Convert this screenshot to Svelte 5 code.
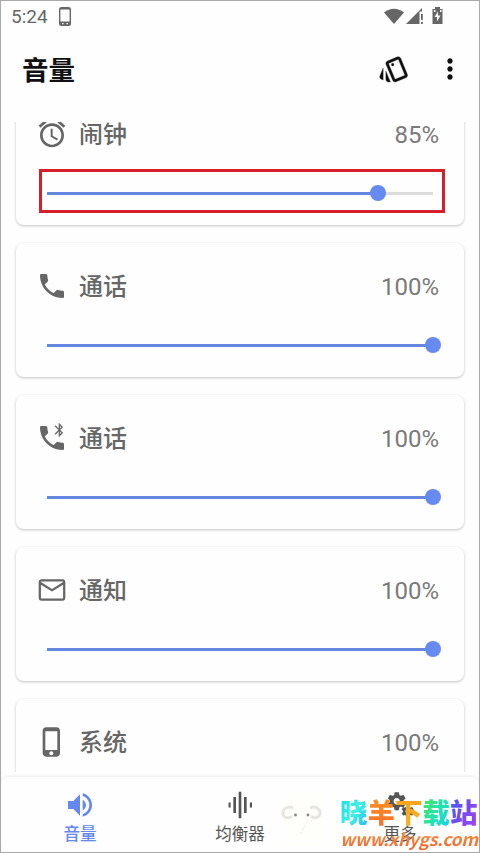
<script lang="ts">
  type Channel = { icon: string; name: string; level: number; marked?: boolean };

  let channels: Channel[] = [
    { icon: "alarm", name: "闹钟", level: 85, marked: true },
    { icon: "call", name: "通话", level: 100 },
    { icon: "bluetooth", name: "通话", level: 100 },
    { icon: "mail", name: "通知", level: 100 },
    { icon: "phone", name: "系统", level: 100 },
  ];

  const tabs = [
    { icon: "volume", name: "音量" },
    { icon: "equalizer", name: "均衡器" },
    { icon: "gears", name: "更多" },
  ];
  let active = "volume";

  function position(level: number) {
    return (Math.round((level / 100) * 7) / 7) * 100;
  }

  const gear =
    "M19.43 12.98c.04-.32.07-.64.07-.98s-.03-.66-.07-.98l2.11-1.65c.19-.15.24-.42.12-.64l-2-3.46c-.12-.22-.39-.3-.61-.22l-2.49 1c-.52-.4-1.08-.73-1.69-.98l-.38-2.65C14.46 2.18 14.25 2 14 2h-4c-.25 0-.46.18-.49.42l-.38 2.65c-.61.25-1.17.59-1.69.98l-2.49-1c-.23-.09-.49 0-.61.22l-2 3.46c-.13.22-.07.49.12.64l2.11 1.65c-.04.32-.07.65-.07.98s.03.66.07.98l-2.11 1.65c-.19.15-.24.42-.12.64l2 3.46c.12.22.39.3.61.22l2.49-1c.52.4 1.08.73 1.69.98l.38 2.65c.03.24.24.42.49.42h4c.25 0 .46-.18.49-.42l.38-2.65c.61-.25 1.17-.59 1.69-.98l2.49 1c.23.09.49 0 .61-.22l2-3.46c.12-.22.07-.49-.12-.64l-2.11-1.65zM12 15.5c-1.93 0-3.5-1.57-3.5-3.5s1.57-3.5 3.5-3.5 3.5 1.57 3.5 3.5-1.57 3.5-3.5 3.5z";

  const paths: Record<string, string> = {
    alarm:
      "M22 5.72l-4.6-3.86-1.29 1.53 4.6 3.86L22 5.72zM7.88 3.39L6.6 1.86 2 5.71l1.29 1.53 4.59-3.85zM12.5 8H11v6l4.75 2.85.75-1.23-4-2.37V8zM12 4c-4.97 0-9 4.03-9 9s4.02 9 9 9c4.97 0 9-4.03 9-9s-4.03-9-9-9zm0 16c-3.87 0-7-3.13-7-7s3.13-7 7-7 7 3.13 7 7-3.13 7-7 7z",
    call:
      "M20 15.5c-1.25 0-2.45-.2-3.57-.57-.35-.11-.74-.03-1.02.24l-2.2 2.2c-2.83-1.44-5.15-3.75-6.59-6.58l2.2-2.21c.28-.27.36-.66.25-1.01C8.7 6.45 8.5 5.25 8.5 4c0-.55-.45-1-1-1H4c-.55 0-1 .45-1 1 0 9.39 7.61 17 17 17 .55 0 1-.45 1-1v-3.5c0-.55-.45-1-1-1z",
    bluetooth:
      "M14.71 9.5L17 7.21V11h.5l2.85-2.85L18.21 6l2.15-2.15L17.5 1H17v3.79L14.71 2.5l-.71.71L16.79 6 14 8.79l.71.71zM18 2.91l.94.94-.94.94V2.91zm0 4.3l.94.94-.94.94V7.21zM20 15.5c-1.25 0-2.45-.2-3.57-.57-.35-.11-.74-.03-1.02.24l-2.2 2.2c-2.83-1.44-5.15-3.75-6.59-6.58l2.2-2.21c.28-.27.36-.66.25-1.01C8.7 6.45 8.5 5.25 8.5 4c0-.55-.45-1-1-1H4c-.55 0-1 .45-1 1 0 9.39 7.61 17 17 17 .55 0 1-.45 1-1v-3.5c0-.55-.45-1-1-1z",
    mail:
      "M20 4H4c-1.1 0-2 .9-2 2v12c0 1.1.9 2 2 2h16c1.1 0 2-.9 2-2V6c0-1.1-.9-2-2-2zm.3 14.300H3.700V8l8.300 5.200 8.300-5.200v10.300zm-8.300-7L3.700 6V5.700h16.600V6l-8.300 5.300z",
    phone:
      "M15.5 1h-8C6.12 1 5 2.12 5 3.5v17C5 21.88 6.12 23 7.5 23h8c1.38 0 2.5-1.12 2.5-2.5v-17C18 2.12 16.88 1 15.5 1zm-4 21c-.83 0-1.5-.67-1.5-1.5s.67-1.5 1.5-1.5 1.5.67 1.5 1.5-.67 1.5-1.5 1.5zm4.5-4H7V4h9v14z",
    volume:
      "M3 9v6h4l5 5V4L7 9H3zm13.5 3c0-1.77-1.02-3.29-2.5-4.03v8.05c1.48-.73 2.5-2.25 2.5-4.02zM14 3.23v2.06c2.89.86 5 3.54 5 6.71s-2.11 5.85-5 6.71v2.06c4.01-.91 7-4.49 7-8.77s-2.99-7.86-7-8.77z",
    equalizer: "M3.4 10.2h1.6v3.6H3.4zM7 6h2v12H7zM11 2h2v20h-2zM15 6h2v12h-2zM19.4 10.2H21v3.6h-1.6z",
    style:
      "M2.53 19.65l1.34.56v-9.03l-2.43 5.86c-.41 1.02.08 2.19 1.09 2.61zm19.5-3.7L17.07 3.98c-.31-.75-1.04-1.21-1.81-1.23-.26 0-.53.04-.79.15L7.1 5.95c-.75.31-1.21 1.03-1.23 1.8-.01.27.04.54.15.8l4.96 11.97c.31.76 1.05 1.22 1.83 1.23.26 0 .52-.05.77-.15l7.36-3.05c1.02-.42 1.51-1.59 1.09-2.6zm-9.2 3.8L7.87 7.79l7.35-3.04h.01l4.95 11.95-7.35 3.05zM10 8.75a1 1 0 1 0 2 0 1 1 0 1 0-2 0zM5.88 19.75c0 1.1.9 2 2 2h1.45l-3.45-8.34v6.34z",
    more:
      "M12 8c1.1 0 2-.9 2-2s-.9-2-2-2-2 .9-2 2 .9 2 2 2zm0 2c-1.1 0-2 .9-2 2s.9 2 2 2 2-.9 2-2-.9-2-2-2zm0 6c-1.1 0-2 .9-2 2s.9 2 2 2 2-.9 2-2-.9-2-2-2z",
  };
</script>

{#snippet icon(name)}
  <svg class="icon" viewBox="0 0 24 24">
    {#if name == "gears"}
      <path d={gear} transform="translate(1.4 1) scale(.68)" />
      <path d={gear} transform="translate(12.2 11.2) scale(.46)" />
    {:else}
      <path class:bold={name == "style"} d={paths[name]} />
    {/if}
  </svg>
{/snippet}

<div class="screen">
  <div class="status">
    <span class="time">5:24</span>
    <svg class="device" viewBox="0 0 12 19">
      <path fill-rule="evenodd" d="M2.5 0h7Q12 0 12 2.5v14Q12 19 9.5 19h-7Q0 19 0 16.5v-14Q0 0 2.5 0zM1.4 2.5v12h9.2v-12zM3 16v1.300h1.500V16zM7.500 16v1.300H9V16z" />
    </svg>
    <svg class="signals" viewBox="0 0 60 20">
      <path d="M0 5.5Q10-2 20 5.5L10 17z" />
      <path d="M22 17L38 1v3.500h-2.500V17zM37 7h1.800v6H37zM37 15h1.800v2H37z" />
      <path fill-rule="evenodd" d="M51 0h5v2h2.500v15h-10V2H51zM54 4.500l-3.500 5.500h2.500v4.500l3.500-6h-2.500zM50 3h1.500v2H50zM56 3h1.500v2H56z" />
    </svg>
  </div>

  <header>
    <h1>音量</h1>
    <button>{@render icon("style")}</button>
    <button>{@render icon("more")}</button>
  </header>

  <main>
    {#each channels as channel}
      <section class="card">
        <div class="row">
          {@render icon(channel.icon)}
          <span class="name">{channel.name}</span>
          <span class="level">{channel.level}%</span>
        </div>
        <div class="slider" class:marked={channel.marked}>
          <div class="track">
            <div class="fill" style="width: {position(channel.level)}%"></div>
          </div>
          <div class="thumb" style="left: {position(channel.level)}%"></div>
        </div>
      </section>
    {/each}
  </main>

  <nav>
    {#each tabs as tab}
      <button class="tab" class:active={active == tab.icon} on:click={() => (active = tab.icon)}>
        {@render icon(tab.icon)}
        <span>{tab.name}</span>
      </button>
    {/each}
  </nav>

  <svg class="sheep" viewBox="0 0 42 54">
    <rect width="42" height="54" fill="#fefefb" />
    <g fill="none" stroke="#e8e5df" stroke-width="3">
      <path d="M12 17C6 14 1 19 2 23s6 5 9 2" />
      <path d="M29 17c6-3 11 2 10 6s-6 5-9 2" />
    </g>
    <path d="M27 29l-6 11M18 42h4" fill="none" stroke="#f2f0eb" />
    <circle cx="14.500" cy="24" r="1.400" fill="#8a8882" />
    <circle cx="27" cy="24" r="1.400" fill="#8a8882" />
  </svg>

  <div class="watermark">
    <div class="site">
      <span class="c1">晓</span><span class="c2">羊</span><span class="c3">下</span><span class="c4">载</span><span class="c5">站</span>
    </div>
    <div class="url">www.xhygs.com</div>
  </div>
</div>

<style>
  :global(body) {
    background: #fff;
  }
  .screen {
    position: relative;
    box-sizing: border-box;
    width: 480px;
    height: 853px;
    border: 1px solid #a9a9a9;
    background: #fefefe;
    overflow: hidden;
    display: flex;
    flex-direction: column;
    font-family: Roboto, "Noto Sans CJK SC", sans-serif;
    color: #666;
  }
  svg {
    display: block;
    fill: currentColor;
    flex: none;
  }
  button {
    border: 0;
    padding: 0;
    background: none;
    color: inherit;
    font: inherit;
  }
  .icon {
    width: 32px;
    height: 32px;
  }
  .bold {
    stroke: currentColor;
    stroke-width: 0.2;
  }
  .status {
    height: 31px;
    flex: none;
    display: flex;
    align-items: center;
    padding: 0 35px 0 10px;
  }
  .time {
    font-size: 19px;
    line-height: 31px;
    width: 48px;
  }
  .device {
    width: 12px;
    height: 19px;
  }
  .signals {
    width: 60px;
    height: 20px;
    margin-left: auto;
  }
  header {
    height: 90px;
    flex: none;
    box-sizing: border-box;
    padding: 21px 13px 0 21px;
    display: flex;
    align-items: flex-start;
    gap: 24px;
    color: #111;
  }
  h1 {
    margin: 1px auto 0 0;
    font-size: 26.5px;
    line-height: 34px;
    font-weight: 700;
  }
  main {
    height: 650px;
    flex: none;
    overflow: hidden;
    display: flex;
    flex-direction: column;
    gap: 18px;
    padding: 0 15px;
  }
  .card {
    height: 134px;
    flex: none;
    box-sizing: border-box;
    padding: 27px 25px 0 20px;
    border-radius: 8px;
    background: #fefefe;
    box-shadow: 0 1px 3px rgba(0, 0, 0, 0.24);
  }
  /* the list is scrolled a little way down */
  .card:first-child {
    margin-top: -31px;
  }
  .row {
    display: flex;
    align-items: center;
    height: 32px;
  }
  .name {
    margin-left: 11px;
    padding-top: 2px;
    font-size: 24px;
    line-height: 32px;
    font-weight: 500;
  }
  .level {
    margin-left: auto;
    font-size: 24px;
    line-height: 32px;
    padding-top: 2px;
    color: #7a7a7a;
  }
  .slider {
    position: relative;
    height: 44px;
    margin: 21px 6px 0 11px;
    display: flex;
    align-items: center;
  }
  .marked::after {
    content: "";
    position: absolute;
    inset: -2px -12px 2px -8px;
    border: 3px solid #d61f2b;
  }
  .track {
    width: 100%;
    height: 3px;
    background: #dcdcdc;
  }
  .fill {
    height: 3px;
    background: #6487e2;
  }
  .thumb {
    position: absolute;
    top: 14px;
    width: 16px;
    height: 16px;
    margin-left: -8px;
    border-radius: 50%;
    background: #668af0;
  }
  nav {
    flex: 1;
    margin-top: 5px;
    display: grid;
    grid-template-columns: 158px 1fr 158px;
    border-radius: 8px;
    background: #fefefe;
    box-shadow: 0 -1px 3px rgba(0, 0, 0, 0.08);
  }
  .tab {
    display: flex;
    flex-direction: column;
    align-items: center;
    padding-top: 12px;
    color: #555;
    font-size: 16.5px;
  }
  .tab span {
    margin-top: 2px;
    line-height: 24px;
  }
  .tab.active {
    color: #6488ee;
    font-weight: 500;
  }
  .sheep {
    position: absolute;
    left: 280px;
    top: 790px;
    width: 42px;
    height: 54px;
  }
  .watermark {
    position: absolute;
    left: 339px;
    top: 795px;
    width: 139px;
  }
  .site {
    display: flex;
    font-size: 27.5px;
    line-height: 36px;
    font-weight: 900;
  }
  .site span {
    color: transparent;
    background-clip: text;
    -webkit-background-clip: text;
  }
  .site .c1 {
    background-image: linear-gradient(120deg, #14dfe8, #3df0e4 50%, #20b0fa);
  }
  .site .c2 {
    background-image: linear-gradient(#fb9420, #fb682b);
  }
  .site .c3 {
    background-image: linear-gradient(#f9a01a, #f7b728);
  }
  .site .c4 {
    background-image: linear-gradient(120deg, #4be558, #20e4b0 50%, #18cdf0);
  }
  .site .c5 {
    background-image: linear-gradient(120deg, #3d60fa, #7a48f5 50%, #a646e8);
  }
  .url {
    font: italic 700 17.5px/24px "Noto Sans CJK SC", sans-serif;
    letter-spacing: -0.3px;
    margin-top: -5px;
    white-space: nowrap;
    color: transparent;
    background: linear-gradient(#f4a040, #f2602e);
    background-clip: text;
    -webkit-background-clip: text;
  }
</style>
